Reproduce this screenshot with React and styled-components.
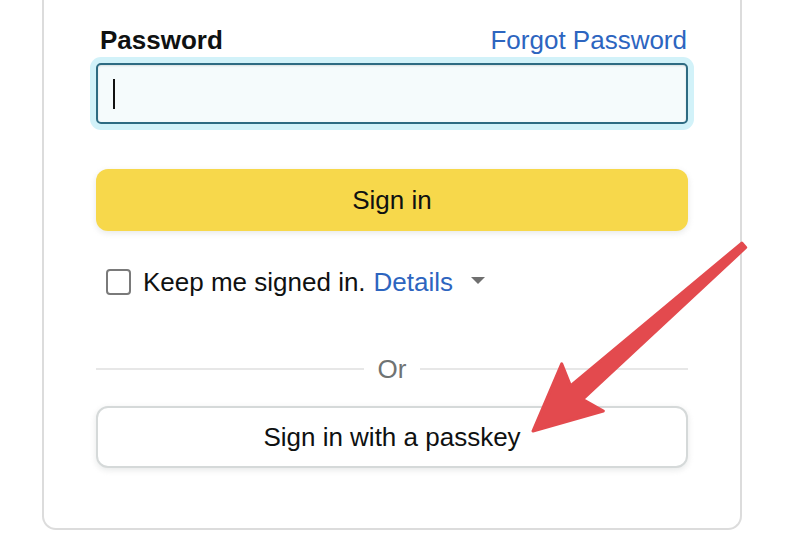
import React from 'react'
import styled, {createGlobalStyle} from 'styled-components'

const GlobalStyle = createGlobalStyle`
    body {
        margin: 0;
        background: #fff;
        font-family: "Liberation Sans", Arial, sans-serif;
        color: #0f1111;
    }
`

function App() {
    return (
        <Page>
            <GlobalStyle />
            <Card>
                <LabelRow>
                    <Label>Password</Label>
                    <TextLink href="#">Forgot Password</TextLink>
                </LabelRow>
                <Input>
                    <Caret />
                </Input>
                <Button primary>Sign in</Button>
                <KeepRow>
                    <Checkbox />
                    <span>Keep me signed in.</span>
                    <TextLink href="#">Details</TextLink>
                    <Caret2 />
                </KeepRow>
                <Divider>
                    <Line />
                    <OrText>Or</OrText>
                    <Line />
                </Divider>
                <Button>Sign in with a passkey</Button>
            </Card>
            <Arrow viewBox="0 0 806 546">
                <polygon
                    points="533,431 561.7,363.8 570.5,385.9 741.8,243.1 745.7,247.5 582.5,399.4 603.3,411"
                    fill="#e34a4e"
                    stroke="#e34a4e"
                    strokeWidth="3"
                    strokeLinejoin="round"
                />
            </Arrow>
        </Page>
    )
}

const Page = styled.div`
    position: relative;
    width: 806px;
    height: 546px;
    overflow: hidden;
`

const Card = styled.div`
    margin-left: 42px;
    width: 700px;
    box-sizing: border-box;
    padding: 25px 52px 60px;
    border: 2px solid #dcdcdc;
    border-top: none;
    border-radius: 0 0 14px 14px;
    display: flex;
    flex-direction: column;
`

const LabelRow = styled.div`
    display: flex;
    justify-content: space-between;
    align-items: baseline;
    font-size: 26px;
    line-height: 30px;
    padding: 0 1px 0 4px;
`

const Label = styled.span`
    font-weight: 700;
`

const TextLink = styled.a`
    color: #2d65bf;
    text-decoration: none;
`

const Input = styled.div`
    margin-top: 8px;
    height: 61px;
    box-sizing: border-box;
    border: 2px solid #2e6b82;
    border-radius: 5px;
    background: #f5fbfc;
    box-shadow: 0 0 0 6px #d2f2f9, inset 0 1px 2px rgba(15, 17, 17, 0.12);
    display: flex;
    align-items: center;
    padding-left: 15px;
`

const Caret = styled.span`
    width: 2px;
    height: 30px;
    background: #111;
`

const Button = styled.button`
    margin-top: ${(p) => (p.primary ? '45px' : '0')};
    height: 62px;
    width: 100%;
    border: ${(p) => (p.primary ? 'none' : '2px solid #d5d9d9')};
    border-radius: 12px;
    background: ${(p) => (p.primary ? '#f7d84b' : '#fff')};
    box-shadow: 0 2px 6px rgba(213, 217, 217, 0.6);
    font-family: "Liberation Sans", Arial, sans-serif;
    font-size: 26px;
    color: #0f1111;
    padding: 0;
`

const KeepRow = styled.div`
    margin-top: 38px;
    height: 26px;
    display: flex;
    align-items: center;
    padding-left: 10px;
    font-size: 26px;
    line-height: 26px;
    gap: 8px;
`

const Checkbox = styled.span`
    width: 25px;
    height: 26px;
    box-sizing: border-box;
    border: 2px solid #7a7a7a;
    border-radius: 4px;
    margin-right: 4px;
`

const Caret2 = styled.span`
    margin-left: 10px;
    width: 0;
    height: 0;
    border-left: 7px solid transparent;
    border-right: 7px solid transparent;
    border-top: 7px solid #6f6f6f;
    margin-top: -4px;
`

const Divider = styled.div`
    margin-top: 61px;
    margin-bottom: 24px;
    height: 26px;
    display: flex;
    align-items: center;
    gap: 14px;
`

const Line = styled.div`
    flex: 1;
    height: 2px;
    background: #e7e7e7;
`

const OrText = styled.span`
    font-size: 26px;
    line-height: 26px;
    color: #6f7373;
`

const Arrow = styled.svg`
    position: absolute;
    left: 0;
    top: 0;
    width: 806px;
    height: 546px;
    pointer-events: none;
`

export default App
